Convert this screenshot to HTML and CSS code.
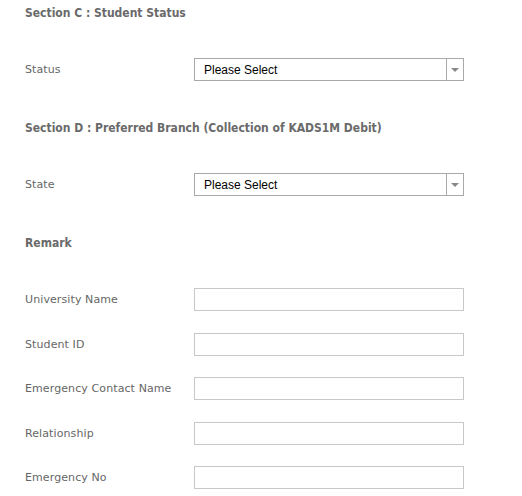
FILE: index.html
```html
<!DOCTYPE html>
<html>
<head>
<meta charset="utf-8">
<link rel="stylesheet" href="styles.css">
</head>
<body>
<div class="form">
  <div class="section">
    <div class="heading">Section C : Student Status</div>
    <div class="row">
      <label class="label">Status</label>
      <div class="select-wrap">
        <select class="select"><option>Please Select</option></select>
        <span class="arrow"></span>
      </div>
    </div>
  </div>
  <div class="section">
    <div class="heading">Section D : Preferred Branch (Collection of KADS1M Debit)</div>
    <div class="row">
      <label class="label">State</label>
      <div class="select-wrap">
        <select class="select"><option>Please Select</option></select>
        <span class="arrow"></span>
      </div>
    </div>
  </div>
  <div class="section">
    <div class="heading">Remark</div>
    <div class="rows">
      <div class="row"><label class="label">University Name</label><input class="input" type="text"></div>
      <div class="row"><label class="label">Student ID</label><input class="input" type="text"></div>
      <div class="row"><label class="label">Emergency Contact Name</label><input class="input" type="text"></div>
      <div class="row"><label class="label">Relationship</label><input class="input" type="text"></div>
      <div class="row"><label class="label">Emergency No</label><input class="input" type="text"></div>
    </div>
  </div>
</div>
</body>
</html>
```
FILE: styles.css
```css
html, body {
  margin: 0;
  padding: 0;
  background: #fff;
}
.form {
  padding: 3px 0 0 25px;
  font-family: "DejaVu Sans", Verdana, sans-serif;
  font-size: 11px;
  letter-spacing: 0.1px;
  color: #666;
}
.section {
  margin-bottom: 37px;
}
.section:last-child {
  margin-bottom: 0;
}
.heading {
  font-weight: bold;
  line-height: 20px;
  height: 20px;
  margin-bottom: 35px;
  font-family: "DejaVu Sans Condensed", "DejaVu Sans", sans-serif;
  font-size: 12px;
  letter-spacing: 0;
  color: #6a6a6a;
}
.rows {
  display: flex;
  flex-direction: column;
  gap: 21.5px;
}
.row {
  display: flex;
  align-items: center;
  height: 23px;
}
.label {
  width: 169px;
  flex: none;
  line-height: 23px;
}
.select-wrap {
  position: relative;
  width: 270px;
  height: 23px;
}
.select {
  -webkit-appearance: none;
  appearance: none;
  box-sizing: border-box;
  width: 270px;
  height: 23px;
  margin: 0;
  border: 1px solid #a9a9a9;
  border-radius: 0;
  background: #fff;
  padding: 0 20px 0 9px;
  font-family: "Liberation Sans", Arial, sans-serif;
  font-size: 12px;
  letter-spacing: 0;
  color: #000;
  outline: none;
}
.arrow {
  position: absolute;
  top: 1px;
  right: 1px;
  width: 17px;
  height: 21px;
  border-left: 1px solid #a9a9a9;
  box-sizing: border-box;
  display: flex;
  align-items: center;
  justify-content: center;
  pointer-events: none;
}
.arrow::after {
  content: "";
  width: 0;
  height: 0;
  border-left: 4px solid transparent;
  border-right: 4px solid transparent;
  border-top: 4px solid #888;
}
.input {
  box-sizing: border-box;
  width: 270px;
  height: 23px;
  margin: 0;
  border: 1px solid #c8c8c8;
  border-radius: 0;
  padding: 0 4px;
  background: #fff;
  outline: none;
}
```
